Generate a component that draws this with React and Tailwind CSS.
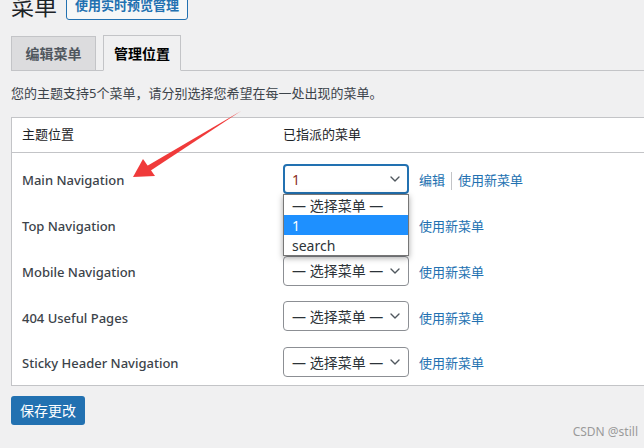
import { ChevronDown } from "lucide-react";

const font = { fontFamily: '"Noto Sans", "Noto Sans CJK SC", sans-serif' };

const rows = [
  { name: "Main Navigation", value: "1", open: true },
  { name: "Top Navigation", value: "— 选择菜单 —" },
  { name: "Mobile Navigation", value: "— 选择菜单 —" },
  { name: "404 Useful Pages", value: "— 选择菜单 —" },
  { name: "Sticky Header Navigation", value: "— 选择菜单 —" },
];

function Select({ value, open }) {
  return (
    <div className="relative mb-[4px]">
      <div
        className={`w-[126px] h-[30px] bg-white rounded-[4px] flex items-center justify-between text-[14px] ${
          open ? "border-2 border-[#2271b1] pl-[7px] pr-[4px] text-[#8a2d1e]" : "border border-[#8c8f94] pl-[8px] pr-[5px] text-[#2c3338]"
        }`}
      >
        <span className="whitespace-nowrap">{value}</span>
        <ChevronDown size={16} strokeWidth={2} className="text-[#50575e] shrink-0" />
      </div>
      {open && (
        <div className="absolute left-0 top-[30px] w-[126px] bg-white border border-[#767676] shadow-[0_2px_6px_rgba(0,0,0,0.35)] text-[14px] z-10">
          <div className="h-[20px] px-[8px] flex items-center text-[#2c3338]">— 选择菜单 —</div>
          <div className="h-[20px] px-[8px] flex items-center bg-[#1e90ff] text-white">1</div>
          <div className="h-[20px] px-[8px] flex items-center text-[#2c3338]">search</div>
        </div>
      )}
    </div>
  );
}

export default function App() {
  return (
    <div className="relative w-[644px] h-[448px] bg-[#f0f0f1] overflow-hidden" style={font}>
      <div className="pl-[11px]">
        {/* Title */}
        <div className="flex items-center gap-[9px] mt-[-8px] h-[28px]">
          <h1 className="text-[23px] leading-[28px] text-[#1d2327] font-normal">菜单</h1>
          <button className="h-[28px] px-[8px] border border-[#2271b1] rounded-[3px] bg-[#f6f7f7] text-[#2271b1] text-[13px] font-semibold">
            使用实时预览管理
          </button>
        </div>

        {/* Tabs */}
        <div className="mt-[15px] flex items-end gap-[7px] border-b border-[#c3c4c7] h-[36px]">
          <div className="h-[35px] w-[85px] mb-[-1px] flex items-center justify-center bg-[#dcdcde] border border-[#c3c4c7] text-[#50575e] text-[14px] font-semibold">
            编辑菜单
          </div>
          <div className="h-[36px] w-[78px] mb-[-1px] flex items-center justify-center bg-[#f0f0f1] border border-[#c3c4c7] border-b-[#f0f0f1] text-black text-[14px] font-semibold">
            管理位置
          </div>
        </div>

        <p className="mt-[12px] text-[13px] leading-[20px] text-[#3c434a]">
          您的主题支持5个菜单，请分别选择您希望在每一处出现的菜单。
        </p>

        {/* Table card */}
        <div className="mt-[14px] w-[700px] bg-white border border-[#c3c4c7]">
          <div className="h-[35px] flex items-center border-b border-[#c3c4c7] text-[13px] text-[#1d2327]">
            <div className="w-[271px] pl-[10px]">主题位置</div>
            <div>已指派的菜单</div>
          </div>
          <div className="pt-[7px] flex flex-col gap-[3.75px]">
            {rows.map((r) => (
              <div key={r.name} className="h-[42px] flex items-center text-[13px]">
                <div className="w-[271px] pl-[10px] text-[#3c434a] font-medium">{r.name}</div>
                <Select value={r.value} open={r.open} />
                <div className="ml-[10px] flex items-center text-[#2271b1]">
                  {r.open && (
                    <>
                      <span>编辑</span>
                      <span className="mx-[6px] h-[18px] border-l border-[#c3c4c7]" />
                    </>
                  )}
                  <span>使用新菜单</span>
                </div>
              </div>
            ))}
          </div>
        </div>

        <button className="mt-[10px] h-[29px] w-[74px] rounded-[3px] bg-[#2271b1] text-white text-[14px]">
          保存更改
        </button>
      </div>

      {/* annotation arrow */}
      <svg className="absolute left-0 top-0 pointer-events-none" width="644" height="448">
        <polygon points="241,111 147,166 150,171" fill="#f03a3a" />
        <polygon points="133,177 143,159 155,176" fill="#f03a3a" />
      </svg>

      <div className="absolute right-[6px] bottom-[7px] text-[12px] text-[#9a9a9a]">CSDN @still</div>
    </div>
  );
}
